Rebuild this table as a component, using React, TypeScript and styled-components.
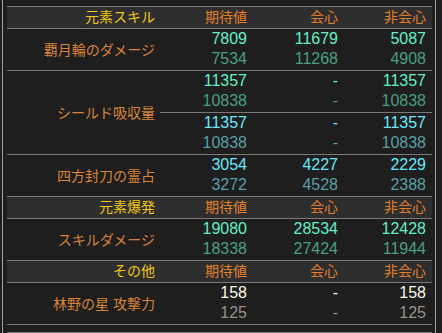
import React from 'react';
import styled, { createGlobalStyle } from 'styled-components';

const GlobalStyle = createGlobalStyle`
    html, body {
        margin: 0;
        padding: 0;
        background: #1e1e1e;
        overflow: hidden;
        font-family: "Liberation Sans", "Noto Sans CJK JP", sans-serif;
    }
`;

const Frame = styled.div`
    margin-left: 2px;
    width: 434px;
    height: 333px;
    padding: 0 3px 0 4px;
    box-sizing: border-box;
    border-left: 1px solid #a0a0a0;
    border-right: 1px solid #a0a0a0;
    overflow: hidden;
`;

const Table = styled.div`
    margin-top: -15px;
`;

const COLS = '93px 91px 1fr';

const HeaderRow = styled.div`
    display: flex;
    height: 21px;
    background: #2e2e2e;
    border-bottom: 1px solid #7a7a7a;
    font-size: 14px;
    line-height: 21px;
`;

const SectionTitle = styled.div`
    width: 153px;
    box-sizing: border-box;
    padding-right: 5px;
    text-align: right;
    color: #f2c814;
`;

const HeaderCols = styled.div`
    flex: 1;
    display: grid;
    grid-template-columns: ${COLS};
`;

const HeaderCell = styled.div`
    padding-right: 6px;
    text-align: right;
    color: #e3802c;
`;

const Group = styled.div`
    display: flex;
    border-bottom: 1px solid #7a7a7a;
`;

const Label = styled.div`
    width: 153px;
    box-sizing: border-box;
    padding-right: 5px;
    display: flex;
    align-items: center;
    justify-content: flex-end;
    color: #da843a;
    font-size: 14px;
`;

const Values = styled.div`
    flex: 1;
    display: flex;
    flex-direction: column;
`;

const Pair = styled.div`
    display: grid;
    grid-template-columns: ${COLS};
    & + & {
        border-top: 1px solid #7a7a7a;
    }
`;

const Cell = styled.div`
    padding-right: 6px;
    text-align: right;
    font-size: 16px;
`;

const Line = styled.div<{ $color: string }>`
    height: 20.5px;
    line-height: 20.5px;
    color: ${p => p.$color};
`;

const Footer = styled.div`
    margin-top: 7px;
    border-top: 1px solid #7a7a7a;
`;

type Tone = 'mint' | 'cyan' | 'white';

const TONES: Record<Tone, [string, string]> = {
    mint: ['#62f0c6', '#4a9e82'],
    cyan: ['#6ae8fa', '#5a9ea6'],
    white: ['#fff6e6', '#9a928a'],
};

type PairData = { tone: Tone; now: string[]; prev: string[] };

const PairRow = ({ tone, now, prev }: PairData) => {
    const [bright, dim] = TONES[tone];
    return <Pair>
        {now.map((v, i) => (
            <Cell key={i}>
                <Line $color={bright}>{v}</Line>
                <Line $color={dim}>{prev[i]}</Line>
            </Cell>
        ))}
    </Pair>;
};

type GroupData = { label: string; pairs: PairData[] };
type SectionData = { title: string; groups: GroupData[] };

const sections: SectionData[] = [
    {
        title: '元素スキル',
        groups: [
            { label: '覇月輪のダメージ', pairs: [{ tone: 'mint', now: ['7809', '11679', '5087'], prev: ['7534', '11268', '4908'] }] },
            {
                label: 'シールド吸収量',
                pairs: [
                    { tone: 'mint', now: ['11357', '-', '11357'], prev: ['10838', '-', '10838'] },
                    { tone: 'cyan', now: ['11357', '-', '11357'], prev: ['10838', '-', '10838'] },
                ],
            },
            { label: '四方封刀の霊占', pairs: [{ tone: 'cyan', now: ['3054', '4227', '2229'], prev: ['3272', '4528', '2388'] }] },
        ],
    },
    {
        title: '元素爆発',
        groups: [
            { label: 'スキルダメージ', pairs: [{ tone: 'mint', now: ['19080', '28534', '12428'], prev: ['18338', '27424', '11944'] }] },
        ],
    },
    {
        title: 'その他',
        groups: [
            { label: '林野の星 攻撃力', pairs: [{ tone: 'white', now: ['158', '-', '158'], prev: ['125', '-', '125'] }] },
        ],
    },
];

const PrevLine = styled(Pair)`
    border-bottom: 1px solid #7a7a7a;
    padding-left: 153px;
`;

export default function App() {
    return <>
        <GlobalStyle />
        <Frame>
            <Table>
                <PrevLine>
                    {['5274', '5596', '5076'].map((v, i) => (
                        <Cell key={i}><Line $color={TONES.mint[1]}>{v}</Line></Cell>
                    ))}
                </PrevLine>
                {sections.map(s => (
                    <React.Fragment key={s.title}>
                        <HeaderRow>
                            <SectionTitle>{s.title}</SectionTitle>
                            <HeaderCols>
                                <HeaderCell>期待値</HeaderCell>
                                <HeaderCell>会心</HeaderCell>
                                <HeaderCell>非会心</HeaderCell>
                            </HeaderCols>
                        </HeaderRow>
                        {s.groups.map(g => (
                            <Group key={g.label}>
                                <Label>{g.label}</Label>
                                <Values>
                                    {g.pairs.map((p, i) => <PairRow key={i} {...p} />)}
                                </Values>
                            </Group>
                        ))}
                    </React.Fragment>
                ))}
                <Footer />
            </Table>
        </Frame>
    </>;
}
